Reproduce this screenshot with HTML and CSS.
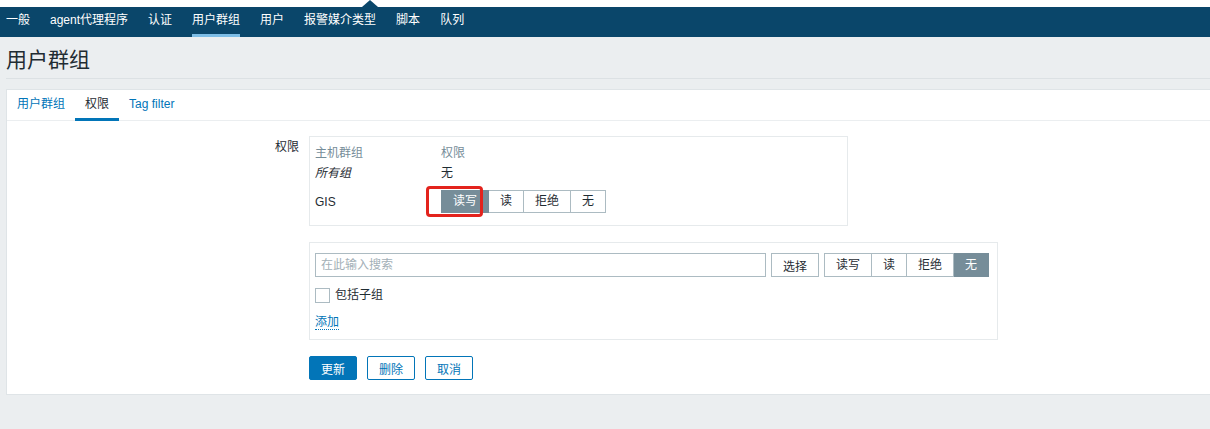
FILE: index.html
```html
<!DOCTYPE html>
<html lang="zh-CN">

<head>
    <meta charset="UTF-8">
    <meta name="viewport" content="width=device-width, initial-scale=1.0">
    <title>用户群组</title>
    <link rel="stylesheet" href="styles.css">
</head>

<body>
    <!-- Top navigation -->
    <header class="top">
        <nav class="top-nav">
            <ul>
                <li>一般</li>
                <li>agent代理程序</li>
                <li>认证</li>
                <li class="selected">用户群组</li>
                <li>用户</li>
                <li>报警媒介类型</li>
                <li>脚本</li>
                <li>队列</li>
            </ul>
        </nav>
    </header>

    <main class="page">
        <div class="page-header">
            <h1>用户群组</h1>
        </div>

        <div class="panel">
            <ul class="tabs">
                <li><a href="#">用户群组</a></li>
                <li class="active">权限</li>
                <li><a href="#">Tag filter</a></li>
            </ul>

            <div class="form">
                <!-- Current permissions -->
                <div class="form-row">
                    <label class="form-label">权限</label>
                    <div class="form-field">
                        <div class="box perm-box">
                            <table class="perm-table">
                                <tr class="head">
                                    <td class="col-group">主机群组</td>
                                    <td>权限</td>
                                </tr>
                                <tr class="row-all">
                                    <td><i>所有组</i></td>
                                    <td>无</td>
                                </tr>
                                <tr class="row-gis">
                                    <td>GIS</td>
                                    <td>
                                        <span class="marked">
                                            <span class="radio-group">
                                                <span class="radio on">读写</span>
                                                <span class="radio">读</span>
                                                <span class="radio">拒绝</span>
                                                <span class="radio">无</span>
                                            </span>
                                            <span class="marker"></span>
                                        </span>
                                    </td>
                                </tr>
                            </table>
                        </div>
                    </div>
                </div>

                <!-- Add new permission -->
                <div class="form-row">
                    <div class="form-label"></div>
                    <div class="form-field">
                        <div class="box add-box">
                            <div class="add-line">
                                <input type="text" class="search" placeholder="在此输入搜索">
                                <button class="btn-alt">选择</button>
                                <span class="radio-group">
                                    <span class="radio">读写</span>
                                    <span class="radio">读</span>
                                    <span class="radio">拒绝</span>
                                    <span class="radio on">无</span>
                                </span>
                            </div>
                            <div class="check-line">
                                <span class="checkbox"></span>
                                <span>包括子组</span>
                            </div>
                            <div class="link-line">
                                <a href="#" class="dotted">添加</a>
                            </div>
                        </div>
                    </div>
                </div>

                <!-- Actions -->
                <div class="form-row">
                    <div class="form-label"></div>
                    <div class="form-field buttons">
                        <button class="btn">更新</button>
                        <button class="btn-alt">删除</button>
                        <button class="btn-alt">取消</button>
                    </div>
                </div>
            </div>
        </div>
    </main>
</body>

</html>
```

FILE: styles.css
```css
* {
    margin: 0;
    padding: 0;
    box-sizing: border-box;
}

body {
    font-family: "Liberation Sans", Arial, "Noto Sans CJK SC", sans-serif;
    font-size: 12px;
    background-color: #ebeef0;
    color: #1f2c33;
    overflow: hidden;
}

a {
    color: #0275b8;
    text-decoration: none;
}

/* top nav */
.top {
    background-color: #fff;
    padding-top: 7px;
}

.top-nav {
    position: relative;
    height: 30px;
    padding-left: 6px;
    background-color: #0a466a;
}

.top-nav::before {
    content: "";
    position: absolute;
    left: 362px;
    top: -7px;
    border-left: 8px solid transparent;
    border-right: 8px solid transparent;
    border-bottom: 7px solid #0a466a;
}

.top-nav ul {
    display: flex;
    list-style: none;
}

.top-nav li {
    margin-right: 20px;
    line-height: 27px;
    border-bottom: 3px solid transparent;
    color: #fff;
    white-space: nowrap;
}

.top-nav li.selected {
    border-bottom-color: #7dbde6;
}

/* page */
.page {
    padding-left: 6px;
}

.page-header {
    padding: 11px 0 6px;
    border-bottom: 1px solid #dce1e4;
}

.page-header h1 {
    font-size: 21px;
    font-weight: normal;
    line-height: 24px;
}

.panel {
    margin-top: 10px;
    background-color: #fff;
    border: 1px solid #dfe4e7;
    border-right: none;
    padding-bottom: 14px;
}

.tabs {
    display: flex;
    list-style: none;
    border-bottom: 1px solid #ebeef0;
}

.tabs li {
    padding: 0 10px;
    line-height: 28px;
    border-bottom: 3px solid transparent;
    margin-bottom: -1px;
}

.tabs li.active {
    border-bottom-color: #0275b8;
}

/* form */
.form {
    display: flex;
    flex-direction: column;
    gap: 16px;
    padding-top: 15px;
}

.form-row {
    display: flex;
    gap: 10px;
}

.form-label {
    width: 292px;
    flex-shrink: 0;
    text-align: right;
    padding-top: 2px;
    line-height: 18px;
}

.box {
    border: 1px solid #e6eaec;
}

.perm-box {
    width: 539px;
    padding: 5px;
}

.perm-table {
    border-collapse: collapse;
}

.perm-table td {
    padding: 0;
    vertical-align: middle;
}

.perm-table .col-group {
    width: 126px;
}

.perm-table .head td {
    height: 18px;
    color: #768d99;
}

.perm-table .row-all td {
    height: 23px;
}

.perm-table .row-all i {
    font-style: italic;
    font-weight: normal;
}

.perm-table .row-gis td {
    height: 37px;
}

.marked {
    position: relative;
    display: inline-block;
    vertical-align: middle;
}

.marker {
    position: absolute;
    left: -15px;
    top: -4px;
    width: 57px;
    height: 31px;
    border: 3px solid #e3231d;
    border-radius: 4px;
}

.radio-group {
    display: inline-flex;
    flex-shrink: 0;
}

.radio {
    height: 24px;
    line-height: 22px;
    padding: 0 11px;
    border: 1px solid #acbbc2;
    border-left: none;
    background-color: #fff;
    color: #1f2c33;
    white-space: nowrap;
}

.radio:first-child {
    border-left: 1px solid #acbbc2;
}

.radio.on {
    background-color: #768d99;
    border-color: #768d99;
    color: #fff;
}

.perm-table .radio {
    height: 23px;
    line-height: 21px;
}

.add-box {
    width: 689px;
    padding: 10px 7px 9px 5px;
}

.add-line {
    display: flex;
    gap: 5px;
}

.add-line > * {
    flex-shrink: 0;
}

.search {
    width: 451px;
    height: 24px;
    padding: 0 5px;
    border: 1px solid #acbbc2;
    font: inherit;
    color: #1f2c33;
}

.search::placeholder {
    color: #a3b0b7;
}

.check-line {
    display: flex;
    align-items: center;
    gap: 5px;
    margin-top: 10px;
    line-height: 16px;
}

.checkbox {
    width: 15px;
    height: 15px;
    border: 1px solid #acbbc2;
}

.link-line {
    margin-top: 11px;
    line-height: 16px;
}

.dotted {
    border-bottom: 1px dotted #0275b8;
}

/* buttons */
.buttons {
    display: flex;
    gap: 10px;
}

.btn,
.btn-alt {
    height: 24px;
    padding: 0 11px;
    font: inherit;
    border: 1px solid #0275b8;
    border-radius: 2px;
    cursor: pointer;
    white-space: nowrap;
}

.btn {
    background-color: #0275b8;
    color: #fff;
}

.btn-alt {
    background-color: #fff;
    color: #0275b8;
}

.add-line .btn-alt {
    border-color: #acbbc2;
    color: #1f2c33;
    border-radius: 0;
}
```
